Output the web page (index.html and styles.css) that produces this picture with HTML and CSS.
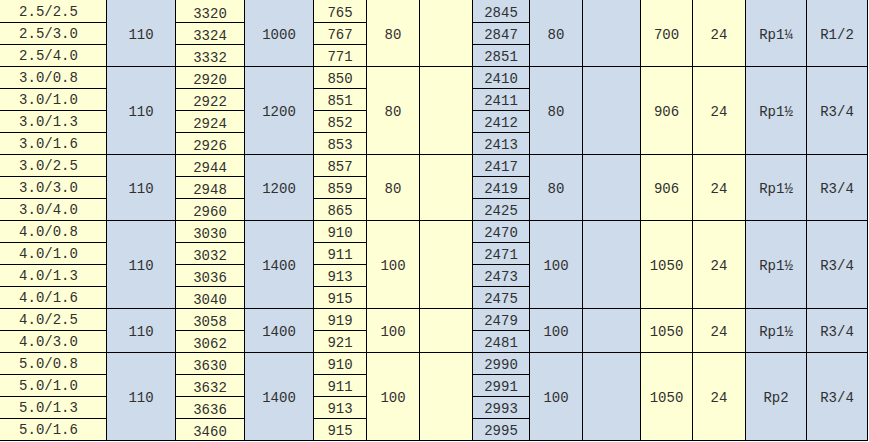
FILE: index.html
```html
<!DOCTYPE html>
<html>
<head>
<meta charset="utf-8">
<link rel="stylesheet" href="styles.css">
</head>
<body>
<div class="wrap">
<table class="spec">
<colgroup>
<col class="w107 y"><col class="w69 b"><col class="w69 y"><col class="w69 b"><col class="w53 y"><col class="w53 y"><col class="w53 y"><col class="w57 b"><col class="w53 b"><col class="w58 b"><col class="w52 y"><col class="w53 y"><col class="w61 b"><col class="w61 b">
</colgroup>
<tbody>
<tr class="top"><td class="c1">2.5/2.5</td><td rowspan="3">110</td><td class="c3">3320</td><td rowspan="3">1000</td><td class="c5">765</td><td rowspan="3">80</td><td rowspan="3"></td><td class="c8">2845</td><td rowspan="3">80</td><td rowspan="3"></td><td rowspan="3">700</td><td rowspan="3">24</td><td rowspan="3">Rp1¼</td><td rowspan="3">R1/2</td></tr>
<tr><td class="c1">2.5/3.0</td><td class="c3">3324</td><td class="c5">767</td><td class="c8">2847</td></tr>
<tr><td class="c1">2.5/4.0</td><td class="c3">3332</td><td class="c5">771</td><td class="c8">2851</td></tr>

<tr><td class="c1">3.0/0.8</td><td rowspan="4">110</td><td class="c3">2920</td><td rowspan="4">1200</td><td class="c5">850</td><td rowspan="4">80</td><td rowspan="4"></td><td class="c8">2410</td><td rowspan="4">80</td><td rowspan="4"></td><td rowspan="4">906</td><td rowspan="4">24</td><td rowspan="4">Rp1½</td><td rowspan="4">R3/4</td></tr>
<tr><td class="c1">3.0/1.0</td><td class="c3">2922</td><td class="c5">851</td><td class="c8">2411</td></tr>
<tr><td class="c1">3.0/1.3</td><td class="c3">2924</td><td class="c5">852</td><td class="c8">2412</td></tr>
<tr><td class="c1">3.0/1.6</td><td class="c3">2926</td><td class="c5">853</td><td class="c8">2413</td></tr>

<tr><td class="c1">3.0/2.5</td><td rowspan="3">110</td><td class="c3">2944</td><td rowspan="3">1200</td><td class="c5">857</td><td rowspan="3">80</td><td rowspan="3"></td><td class="c8">2417</td><td rowspan="3">80</td><td rowspan="3"></td><td rowspan="3">906</td><td rowspan="3">24</td><td rowspan="3">Rp1½</td><td rowspan="3">R3/4</td></tr>
<tr><td class="c1">3.0/3.0</td><td class="c3">2948</td><td class="c5">859</td><td class="c8">2419</td></tr>
<tr><td class="c1">3.0/4.0</td><td class="c3">2960</td><td class="c5">865</td><td class="c8">2425</td></tr>

<tr><td class="c1">4.0/0.8</td><td rowspan="4">110</td><td class="c3">3030</td><td rowspan="4">1400</td><td class="c5">910</td><td rowspan="4">100</td><td rowspan="4"></td><td class="c8">2470</td><td rowspan="4">100</td><td rowspan="4"></td><td rowspan="4">1050</td><td rowspan="4">24</td><td rowspan="4">Rp1½</td><td rowspan="4">R3/4</td></tr>
<tr><td class="c1">4.0/1.0</td><td class="c3">3032</td><td class="c5">911</td><td class="c8">2471</td></tr>
<tr><td class="c1">4.0/1.3</td><td class="c3">3036</td><td class="c5">913</td><td class="c8">2473</td></tr>
<tr><td class="c1">4.0/1.6</td><td class="c3">3040</td><td class="c5">915</td><td class="c8">2475</td></tr>

<tr><td class="c1">4.0/2.5</td><td rowspan="2">110</td><td class="c3">3058</td><td rowspan="2">1400</td><td class="c5">919</td><td rowspan="2">100</td><td rowspan="2"></td><td class="c8">2479</td><td rowspan="2">100</td><td rowspan="2"></td><td rowspan="2">1050</td><td rowspan="2">24</td><td rowspan="2">Rp1½</td><td rowspan="2">R3/4</td></tr>
<tr><td class="c1">4.0/3.0</td><td class="c3">3062</td><td class="c5">921</td><td class="c8">2481</td></tr>

<tr><td class="c1">5.0/0.8</td><td rowspan="4">110</td><td class="c3">3630</td><td rowspan="4">1400</td><td class="c5">910</td><td rowspan="4">100</td><td rowspan="4"></td><td class="c8">2990</td><td rowspan="4">100</td><td rowspan="4"></td><td rowspan="4">1050</td><td rowspan="4">24</td><td rowspan="4">Rp2</td><td rowspan="4">R3/4</td></tr>
<tr><td class="c1">5.0/1.0</td><td class="c3">3632</td><td class="c5">911</td><td class="c8">2991</td></tr>
<tr><td class="c1">5.0/1.3</td><td class="c3">3636</td><td class="c5">913</td><td class="c8">2993</td></tr>
<tr><td class="c1">5.0/1.6</td><td class="c3">3460</td><td class="c5">915</td><td class="c8">2995</td></tr>
</tbody>
</table>
</div>
</body>
</html>
```

FILE: styles.css
```css
html, body {
  margin: 0;
  padding: 0;
  background: #ffffff;
}
.wrap {
  width: 869px;
  height: 442px;
  overflow: hidden;
}
.spec {
  border-collapse: collapse;
  table-layout: fixed;
  width: 869px;
  margin: 0 0 0 -1px;
  font-family: "Liberation Mono", "DejaVu Sans Mono", monospace;
  font-size: 14px;
  color: #303030;
}
.spec td {
  border: 1px solid #000000;
  height: 18px;
  padding: 3px 0 0 0;
  text-align: center;
  vertical-align: middle;
  line-height: 18px;
  white-space: nowrap;
}
.spec .top td { border-top-color: #ffffd6; }
.spec .top td:nth-child(2),
.spec .top td:nth-child(4),
.spec .top td:nth-child(8),
.spec .top td:nth-child(9),
.spec .top td:nth-child(10),
.spec .top td:nth-child(13),
.spec .top td:nth-child(14) { border-top-color: #cddbeb; }
.y { background: #ffffd6; }
.b { background: #cddbeb; }
.w107 { width: 107px; }
.w69 { width: 69px; }
.w53 { width: 53px; }
.w57 { width: 57px; }
.w58 { width: 58px; }
.w52 { width: 52px; }
.w61 { width: 61px; }
.spec td.c1 { padding: 1px 9px 0 0; height: 20px; line-height: 20px; }
.spec td.c3 { padding: 5px 0 0 0; height: 16px; line-height: 16px; }
.spec td.c5, .spec td.c8 { padding: 3px 0 0 0; height: 18px; line-height: 18px; }
```
